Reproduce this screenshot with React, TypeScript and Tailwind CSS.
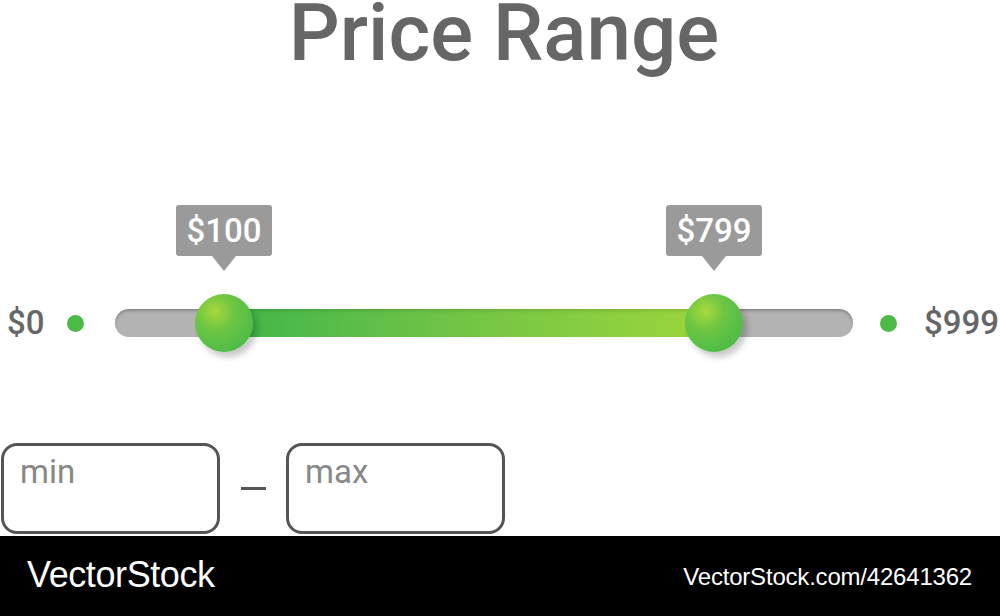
import React from "react";

const roboto = { fontFamily: "Roboto, 'Noto Sans', sans-serif" };
const helv = { fontFamily: "'Liberation Sans', Arial, sans-serif" };

type Handle = { label: string; left: number };

const handles: Handle[] = [
  { label: "$100", left: 109 },
  { label: "$799", left: 599 },
];

function Dot() {
  return <div className="w-[17px] h-[17px] rounded-full bg-[#4bbb46] shrink-0" />;
}

function Tooltip({ label }: { label: string }) {
  return (
    <div className="absolute left-1/2 -translate-x-1/2 top-[-89px] flex flex-col items-center">
      <div className="w-[96px] h-[51px] rounded-[3px] bg-[#9a9a9a] text-white text-[33px] leading-none flex items-center justify-center">
        {label}
      </div>
      <div className="w-0 h-0 border-l-[12px] border-r-[12px] border-t-[15px] border-l-transparent border-r-transparent border-t-[#9a9a9a]" />
    </div>
  );
}

function Thumb({ handle }: { handle: Handle }) {
  return (
    <div
      className="absolute top-1/2 -translate-y-1/2 -translate-x-1/2 w-[58px] h-[58px]"
      style={{ left: handle.left }}
    >
      <Tooltip label={handle.label} />
      <div className="w-full h-full rounded-full bg-[radial-gradient(circle_at_35%_30%,#a8d93a_0%,#6cc543_35%,#3db64a_100%)] shadow-[4px_5px_6px_rgba(0,0,0,0.22)]" />
    </div>
  );
}

function RangeTrack() {
  const [lo, hi] = handles;
  return (
    <div className="relative ml-[31px] w-[738px] h-[28px] rounded-full bg-[#b3b3b3] shadow-[inset_0_2px_3px_rgba(0,0,0,0.25)] shrink-0">
      <div
        className="absolute top-0 h-full bg-gradient-to-r from-[#3cb54a] to-[#9dd63a] shadow-[inset_0_2px_3px_rgba(0,0,0,0.12)]"
        style={{ left: lo.left, width: hi.left - lo.left }}
      />
      {handles.map((h) => (
        <Thumb key={h.label} handle={h} />
      ))}
    </div>
  );
}

function Field({ placeholder }: { placeholder: string }) {
  return (
    <div className="w-[219px] h-[91px] border-[3px] border-[#555] rounded-[16px] pl-[16px] pt-[9px] text-[33px] leading-none text-[#888] shrink-0">
      {placeholder}
    </div>
  );
}

export default function App() {
  return (
    <div className="w-[1000px] h-[616px] bg-white overflow-hidden flex flex-col" style={roboto}>
      <h1 className="mt-[-7px] pl-[8px] text-center text-[80px] leading-none font-medium text-[#666]">
        Price Range
      </h1>

      <div className="mt-[221px] h-[58px] flex items-center text-[33px] font-medium text-[#666]">
        <div className="w-[60px] pl-[7px] shrink-0">$0</div>
        <div className="ml-[7px]">
          <Dot />
        </div>
        <RangeTrack />
        <div className="ml-[27px]">
          <Dot />
        </div>
        <div className="ml-[27px] whitespace-nowrap">$999</div>
      </div>

      <div className="mt-[91px] flex items-center pl-[1px]">
        <Field placeholder="min" />
        <div className="ml-[21px] w-[25px] h-[3px] bg-[#555] shrink-0" />
        <div className="ml-[20px]">
          <Field placeholder="max" />
        </div>
      </div>

      <div className="mt-[2px] h-[80px] bg-black text-white flex items-center justify-between pl-[27px] pr-[28px]" style={helv}>
        <span className="text-[36px] tracking-[-0.4px] leading-none mt-[-3px]">VectorStock</span>
        <span className="text-[24px] tracking-[-0.2px] leading-none mt-[2px]">VectorStock.com/42641362</span>
      </div>
    </div>
  );
}
